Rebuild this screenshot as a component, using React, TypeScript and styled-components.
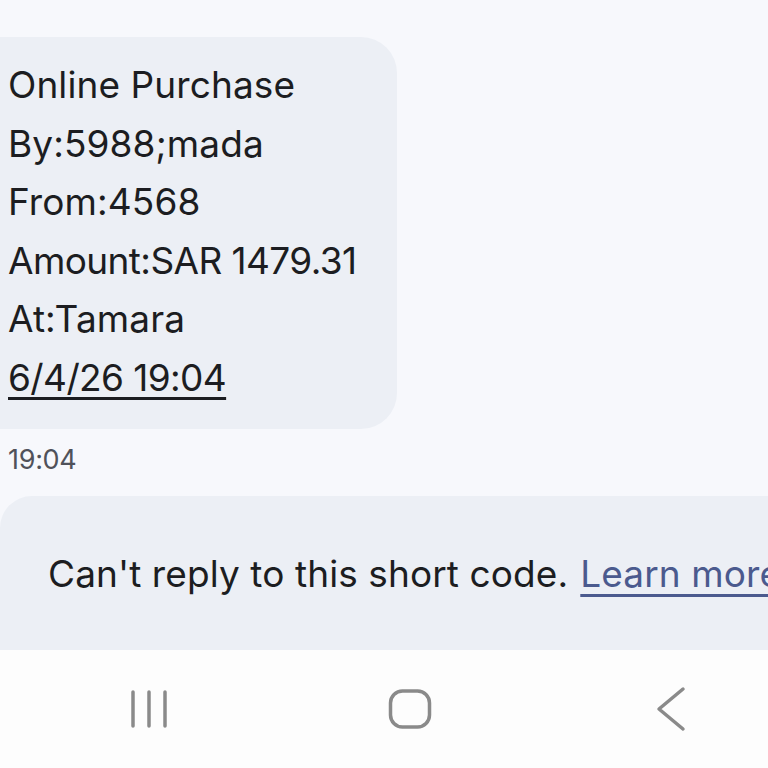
import React from 'react';
import styled, { createGlobalStyle } from 'styled-components';

const GlobalStyle = createGlobalStyle`
  html, body {
    margin: 0;
    padding: 0;
    background: #f7f8fc;
  }
  * {
    box-sizing: border-box;
  }
`;

const Screen = styled.div`
  width: 768px;
  height: 768px;
  overflow: hidden;
  display: flex;
  flex-direction: column;
  background: #f7f8fc;
  font-family: Inter, Roboto, sans-serif;
  color: #1c1d21;
`;

const Thread = styled.div`
  flex: 1;
  display: flex;
  flex-direction: column;
  align-items: flex-start;
  padding-top: 37px;
`;

const Bubble = styled.div`
  width: 397px;
  background: #eceff5;
  border-radius: 0 36px 36px 0;
  padding: 19px 0 21px 8px;
`;

const Line = styled.div<{ $numeric?: boolean }>`
  font-size: 37px;
  line-height: 58.6px;
  letter-spacing: ${(p) => (p.$numeric ? '-0.6px' : '0.1px')};
  white-space: nowrap;
`;

const DateLink = styled.span`
  text-decoration: underline;
  text-decoration-thickness: 3px;
  text-underline-offset: 6px;
`;

const Stamp = styled.div`
  margin: 14px 0 0 8px;
  font-size: 27px;
  letter-spacing: -0.3px;
  color: #50525a;
`;

const Banner = styled.div`
  height: 154px;
  margin-top: auto;
  background: #eceff5;
  border-top-left-radius: 32px;
  display: flex;
  align-items: center;
  padding-left: 48px;
  white-space: nowrap;
  font-size: 37px;
  letter-spacing: 0.1px;
`;

const LearnMore = styled.span`
  margin-left: 12px;
  color: #4b5a8e;
  text-decoration: underline;
  text-decoration-thickness: 3px;
  text-underline-offset: 7px;
`;

const NavBar = styled.div`
  height: 118px;
  background: #fdfdfd;
  display: flex;
  align-items: center;
  gap: 213px;
  padding-left: 125px;
`;

const NavIcon = styled.svg`
  width: 48px;
  height: 48px;
  flex-shrink: 0;
  stroke: #8a8a8a;
  fill: none;
  stroke-width: 3.5;
  stroke-linecap: round;
  stroke-linejoin: round;
`;

const lines = [
  { text: 'Online Purchase' },
  { text: 'By:5988;mada' },
  { text: 'From:4568' },
  { text: 'Amount:SAR 1479.31', numeric: true },
  { text: 'At:Tamara' },
];

export default function App() {
  return (
    <>
      <GlobalStyle />
      <Screen>
        <Thread>
          <Bubble>
            {lines.map((l) => (
              <Line key={l.text} $numeric={l.numeric}>
                {l.text}
              </Line>
            ))}
            <Line $numeric>
              <DateLink>6/4/26 19:04</DateLink>
            </Line>
          </Bubble>
          <Stamp>19:04</Stamp>
        </Thread>
        <Banner>
          Can't reply to this short code.<LearnMore>Learn more</LearnMore>
        </Banner>
        <NavBar>
          <NavIcon viewBox="0 0 48 48">
            <path d="M8 7v34M24 7v34M40 7v34" />
          </NavIcon>
          <NavIcon viewBox="0 0 48 48">
            <rect x="4.5" y="6" width="39" height="36" rx="12" />
          </NavIcon>
          <NavIcon viewBox="0 0 48 48">
            <path d="M36 4L12 24l24 20" />
          </NavIcon>
        </NavBar>
      </Screen>
    </>
  );
}
